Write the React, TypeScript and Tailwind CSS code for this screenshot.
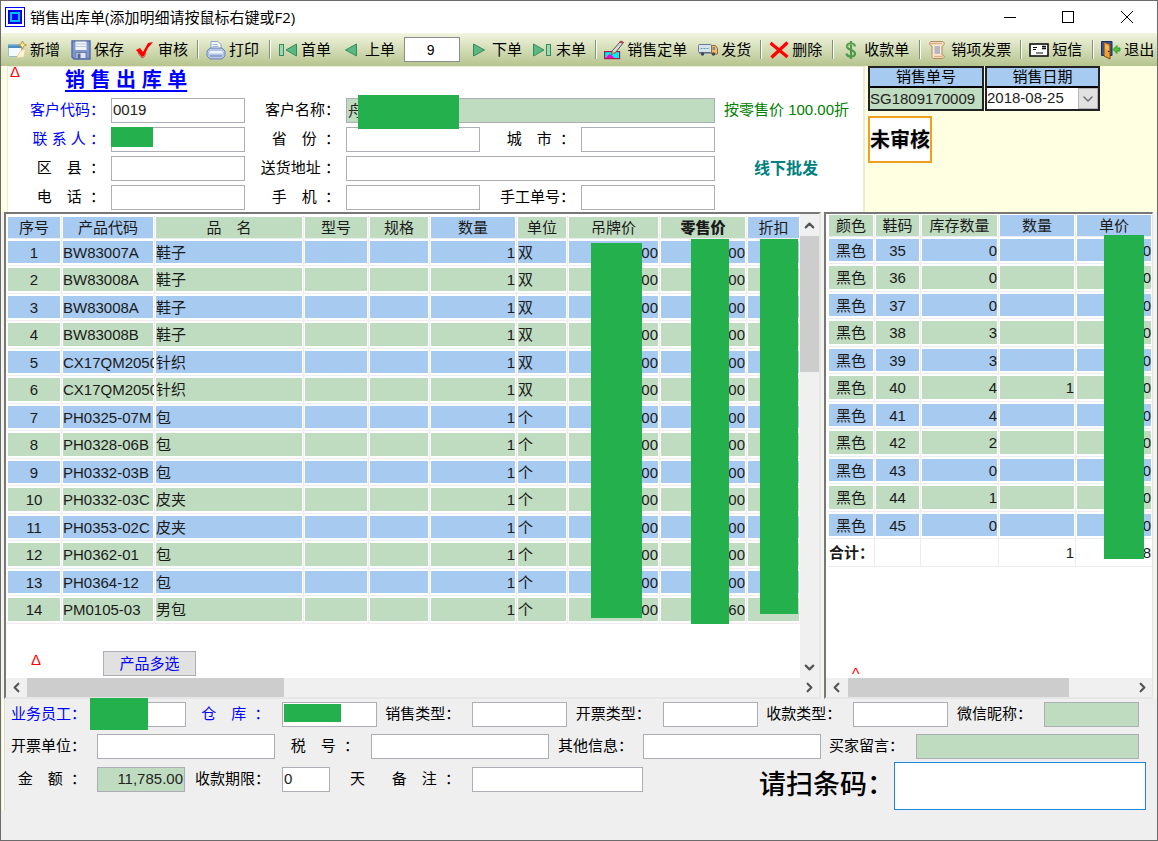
import React from 'react';
import { ChevronDown, ChevronLeft, ChevronRight, ChevronUp } from 'lucide-react';

const ICON = 'h-[20px] w-[20px] shrink-0';

const NewIcon = () => (
  <svg className={ICON} viewBox="0 0 20 20">
    <rect x="1.500" y="4.500" width="13" height="12" rx="1" fill="#f3fafd" stroke="#9db8c8" />
    <rect x="1" y="4" width="14" height="4" fill="#4a8fc0" />
    <rect x="1" y="4" width="14" height="1.500" fill="#86bbdc" />
    <path d="M9.500 18l7.500-1 1.500-8-5 2z" fill="#fff2cf" stroke="#e3c98d" strokeWidth=".7" />
    <path d="M15.500 1l1.200 2.800L19.500 5l-2.800 1.200L15.500 9l-1.200-2.800L11.500 5l2.800-1.200z" fill="#ffe9a0" stroke="#b98f2e" strokeWidth=".9" />
  </svg>
);
const SaveIcon = () => (
  <svg className={ICON} viewBox="0 0 20 20">
    <path d="M1 1h18v18H3l-2-2z" fill="#8097cf" stroke="#5468a8" strokeWidth="1.400" />
    <rect x="4.500" y="1.500" width="11" height="8.500" fill="#f2f5fa" />
    <path d="M5 4h10M5 6.500h10" stroke="#b9c7de" />
    <rect x="5" y="12.500" width="10" height="6" fill="#dfe4ea" stroke="#5b6f99" strokeWidth=".8" />
    <rect x="6.500" y="13.500" width="3" height="5" fill="#4d68a8" />
  </svg>
);
const CheckIcon = () => (
  <svg className={ICON} viewBox="0 0 20 20">
    <path d="M1 10l4-2 3 4 5-9 5-1-5 6-4 8-2 1z" fill="#f00" />
    <path d="M3 13l4 5 2-1 2-4" stroke="#b55" fill="none" />
  </svg>
);
const PrintIcon = () => (
  <svg className={ICON} viewBox="0 0 20 20">
    <path d="M5 9V1.500h7l3 3V9z" fill="#fbfdff" stroke="#88a2c8" />
    <path d="M6.500 4.500h5M6.500 6.500h6" stroke="#9bb5dc" />
    <path d="M1 11l3-3h12l3 3v5l-3 3H4l-3-3z" fill="#b3c4e4" stroke="#6d86b4" />
    <path d="M4 11h12l1 2.500H3z" fill="#eef3fb" />
    <path d="M4 16h12" stroke="#6d86b4" />
  </svg>
);
const FirstIcon = () => (
  <svg className={ICON} viewBox="0 0 20 20">
    <rect x="1.500" y="4.500" width="4" height="11" fill="#9fd7b2" stroke="#348c5c" />
    <path d="M18.500 4v12L8 10z" fill="#5cb882" stroke="#348c5c" />
  </svg>
);
const PrevIcon = () => (
  <svg className={ICON} viewBox="0 0 20 20">
    <path d="M14.500 4v12L3.500 10z" fill="#5cb882" stroke="#348c5c" />
  </svg>
);
const NextIcon = () => (
  <svg className={ICON} viewBox="0 0 20 20">
    <path d="M4.500 4v12l11-6z" fill="#5cb882" stroke="#348c5c" />
  </svg>
);
const LastIcon = () => (
  <svg className={ICON} viewBox="0 0 20 20">
    <path d="M.500 4v12L11 10z" fill="#5cb882" stroke="#348c5c" />
    <rect x="13.500" y="4.500" width="4" height="11" fill="#9fd7b2" stroke="#348c5c" />
  </svg>
);
const OrderIcon = () => (
  <svg className={ICON} viewBox="0 0 20 20">
    <rect x=".600" y="11.600" width="15" height="7" fill="#0ee" stroke="#a02050" strokeWidth="1.200" />
    <path d="M1.500 18l4-4 3 2 2 2z" fill="#f0c" />
    <path d="M7.500 14.500l1-4L16.500 1.500l3 1-8 10z" fill="#d9d9d9" stroke="#444" strokeWidth=".9" />
    <path d="M15 2l2-1.500 2.500 1.500-1 2z" fill="#b8434e" />
    <path d="M7.500 14.500l1-3 2 1.500z" fill="#e8a33a" />
  </svg>
);
const TruckIcon = () => (
  <svg className={ICON} viewBox="0 0 20 20">
    <rect x=".500" y="4.500" width="13" height="8" rx="1" fill="#d5e3ec" stroke="#667c99" />
    <path d="M2.500 8.500h9" stroke="#55a0b0" strokeDasharray="2 1" />
    <path d="M13.500 5.500h4l2 3V14h-6z" fill="#f0bd60" stroke="#8a6d45" />
    <rect x="14.500" y="7" width="2.500" height="3" fill="#889" />
    <path d="M1 13h12" stroke="#4b5f80" />
    <circle cx="4.500" cy="14" r="1.700" fill="#445" />
    <circle cx="15.500" cy="14" r="1.700" fill="#445" />
  </svg>
);
const DeleteIcon = () => (
  <svg className={ICON} viewBox="0 0 20 20">
    <path d="M1.500 3l17 14M18.500 2.500L2.500 17.500" stroke="#f00" strokeWidth="3.200" />
  </svg>
);
const DollarIcon = () => (
  <svg className={ICON} viewBox="0 0 20 20">
    <path d="M14 6.500c-.5-4-8-4-8 0s8 3 8 7-8 4-8.500 0M10 1v18" fill="none" stroke="#4d9a4a" strokeWidth="2.200" />
    <path d="M13.500 6.500c-.5-3-7-3-7 0" fill="none" stroke="#8fca78" strokeWidth="1" />
  </svg>
);
const InvoiceIcon = () => (
  <svg className={ICON} viewBox="0 0 20 20">
    <path d="M3 1.500h11c3 0 3 4 0 4.500v9c3 0 3 3.500 0 3.500H6c-2 0-2-2-2-3V6C1 6 1 1.500 3 1.500z" fill="#fbe9cf" stroke="#b58b62" />
    <path d="M6.500 7h5.500M6.500 9h5.500M6.500 11h5.500M6.500 13h5.500" stroke="#6f8ab5" />
    <path d="M2 3.500h12M6 16.500h9" stroke="#d9b083" strokeWidth="1.500" />
  </svg>
);
const MessageIcon = () => (
  <svg className={ICON} viewBox="0 0 20 20">
    <rect x="1" y="4" width="18" height="12" fill="#fff" stroke="#111" strokeWidth="1.600" />
    <path d="M4 7.500h4M4 9.500h3M7 13h7" stroke="#111" />
    <path d="M13 6.500h4M13 8.500h4" stroke="#111" strokeWidth="1.500" />
  </svg>
);
const ExitIcon = () => (
  <svg className={ICON} viewBox="0 0 20 20">
    <path d="M.500 1.500h10.500v14H.500z" fill="#2c55ad" stroke="#1b2c5c" />
    <path d="M3 2l6 2.500V19l-6-3z" fill="#f0a030" stroke="#7a4310" />
    <path d="M4.500 5l3 1v4l-3-1z" fill="#f9c05f" />
    <circle cx="7.700" cy="11.500" r=".8" fill="#402000" />
    <path d="M12 9.500l4-4v2.500h3v3h-3v2.500z" fill="#4fc43a" stroke="#2c8a22" strokeWidth=".8" />
  </svg>
);

function Tool({ icon, text }: { icon: React.ReactNode; text: string }) {
  return (
    <button type="button" className="flex shrink-0 items-center gap-[3px] whitespace-nowrap leading-[20px]">
      {icon}
      <span>{text}</span>
    </button>
  );
}
const Group = ({ children }: { children: React.ReactNode }) => (
  <div className="flex shrink-0 items-center gap-[11px]">{children}</div>
);
const Sep = () => <div className="mr-[7px] ml-[10px] h-[19px] w-[2px] shrink-0 border-l border-[#7d9470] bg-white" />;
const TightSep = () => <div className="mr-[7px] ml-[9px] h-[19px] w-[2px] shrink-0 border-l border-[#7d9470] bg-white" />;

const BOX = 'h-[25px] min-w-0 border border-[#adadb6] px-px pb-[3px] text-[15px] leading-[20px] text-[#222] outline-none';

const Caption = ({ id, text, className = '' }: { id: string; text: string; className?: string }) => (
  <label htmlFor={id} className={`text-right whitespace-pre ${className}`}>
    {text}
  </label>
);
const Field = ({ id, value = '', className = '' }: { id: string; value?: string; className?: string }) => (
  <input id={id} defaultValue={value} className={`${BOX} ${className}`} />
);

const CELL = 'overflow-hidden border-r border-b border-[#ededed] bg-clip-content px-px py-[2px] leading-[21px] whitespace-nowrap';
const HEAD = 'overflow-hidden border-r border-b border-[#ededed] bg-clip-content px-px pt-px leading-[21px] whitespace-nowrap';
const BLUE = 'bg-[#a6caf0]';
const GREEN = 'bg-[#c0dcc0]';

const LEFT_HEAD: [string, string, string][] = [
  ['序号', 'w-[55px]', `${BLUE} font-normal`],
  ['产品代码', 'w-[93px]', `${BLUE} font-normal`],
  ['品　名', 'w-[149px]', `${GREEN} font-normal`],
  ['型号', 'w-[65px]', `${GREEN} font-normal`],
  ['规格', 'w-[61px]', `${GREEN} font-normal`],
  ['数量', 'w-[87px]', `${BLUE} font-normal`],
  ['单位', 'w-[51px]', `${GREEN} font-normal`],
  ['吊牌价', 'w-[92px]', `${GREEN} font-normal`],
  ['零售价', 'w-[87px]', `${GREEN} font-black`],
  ['折扣', 'w-[54px]', `${BLUE} font-normal`],
];
const PRODUCTS: [string, string, string, string][] = [
  ['BW83007A', '鞋子', '双', '00'],
  ['BW83008A', '鞋子', '双', '00'],
  ['BW83008A', '鞋子', '双', '00'],
  ['BW83008B', '鞋子', '双', '00'],
  ['CX17QM2050', '针织', '双', '00'],
  ['CX17QM2050', '针织', '双', '00'],
  ['PH0325-07M', '包', '个', '00'],
  ['PH0328-06B', '包', '个', '00'],
  ['PH0332-03B', '包', '个', '00'],
  ['PH0332-03C', '皮夹', '个', '00'],
  ['PH0353-02C', '皮夹', '个', '00'],
  ['PH0362-01', '包', '个', '00'],
  ['PH0364-12', '包', '个', '00'],
  ['PM0105-03', '男包', '个', '60'],
];
const RIGHT_HEAD: [string, string, string][] = [
  ['颜色', 'w-[47px]', GREEN],
  ['鞋码', 'w-[46px]', GREEN],
  ['库存数量', 'w-[78px]', GREEN],
  ['数量', 'w-[77px]', BLUE],
  ['单价', 'w-[77px]', BLUE],
];
const SIZES: [number, number, string][] = [
  [35, 0, ''], [36, 0, ''], [37, 0, ''], [38, 3, ''], [39, 3, ''], [40, 4, '1'],
  [41, 4, ''], [42, 2, ''], [43, 0, ''], [44, 1, ''], [45, 0, ''],
];

const Cover = ({ className }: { className: string }) => <div className={`absolute bg-[#24b14d] ${className}`} />;

function HScroll({ thumb }: { thumb: string }) {
  return (
    <div className="flex h-[19px] shrink-0 items-center bg-[#f0f0f0] text-[#555]">
      <button type="button" aria-label="向左" className="flex w-[20px] justify-center">
        <ChevronLeft size={15} strokeWidth={3.5} />
      </button>
      <div className="h-full min-w-0 flex-1">
        <div className={`h-full bg-[#cdcdcd] ${thumb}`} />
      </div>
      <button type="button" aria-label="向右" className="flex w-[20px] justify-center">
        <ChevronRight size={15} strokeWidth={3.5} />
      </button>
    </div>
  );
}

function ProductGrid() {
  return (
    <section className="relative flex min-w-0 flex-1 flex-col border-2 border-t-[#777] border-r-[#e6e6e6] border-b-[#e6e6e6] border-l-[#777] bg-white">
      <div className="flex min-h-0 flex-1">
        <div className="min-w-0 flex-1 overflow-hidden pt-[2px] pl-px">
          <table className="w-[794px] table-fixed border-separate border-spacing-0 text-[#1a1a1a]">
            <thead>
              <tr className="h-[23px]">
                {LEFT_HEAD.map(([t, w, c]) => (
                  <th key={t} className={`${HEAD} ${w} ${c}`}>{t}</th>
                ))}
              </tr>
            </thead>
            <tbody>
              {PRODUCTS.map(([code, name, unit, cents], i) => {
                const c = `${CELL} ${i % 2 ? GREEN : BLUE}`;
                return (
                  <tr key={i} className="odd:h-[27px] even:h-[28px]">
                    <td className={`${c} text-center`}>{i + 1}</td>
                    <td className={c}>{code}</td>
                    <td className={c}>{name}</td>
                    <td className={c} />
                    <td className={c} />
                    <td className={`${c} text-right`}>1</td>
                    <td className={c}>{unit}</td>
                    <td className={`${c} text-right`}>00</td>
                    <td className={`${c} text-right`}>{cents}</td>
                    <td className={c} />
                  </tr>
                );
              })}
            </tbody>
          </table>
          <div className="mt-[27px] flex">
            <span className="w-[96px] pl-[24px] text-[15px] leading-[18px] text-[#f00]">Δ</span>
            <button type="button" className="h-[25px] w-[93px] border border-[#adadb6] bg-[#e1e1e1] leading-[20px] text-[#00f]">
              产品多选
            </button>
          </div>
        </div>
        <div className="flex w-[19px] shrink-0 flex-col bg-[#f0f0f0] text-[#555]">
          <button type="button" aria-label="向上" className="flex h-[22px] items-center justify-center">
            <ChevronUp size={15} strokeWidth={3.5} />
          </button>
          <div className="h-[136px] bg-[#cdcdcd]" />
          <button type="button" aria-label="向下" className="mt-auto flex h-[22px] items-center justify-center">
            <ChevronDown size={15} strokeWidth={3.5} />
          </button>
        </div>
      </div>
      <HScroll thumb="ml-px w-[257px]" />
      <Cover className="top-[29px] left-[585px] h-[375px] w-[51px]" />
      <Cover className="top-[25px] left-[685px] h-[385px] w-[38px]" />
      <Cover className="top-[25px] left-[754px] h-[375px] w-[38px]" />
    </section>
  );
}

function SizeGrid() {
  return (
    <section className="relative flex w-[329px] shrink-0 flex-col border-t-2 border-r border-b-2 border-l-2 border-t-[#777] border-r-[#e6e6e6] border-b-[#e6e6e6] border-l-[#777] bg-white">
      <div className="min-h-0 flex-1 overflow-hidden pl-[2px]">
        <table className="w-[325px] table-fixed border-separate border-spacing-0 text-[#1a1a1a]">
          <thead>
            <tr className="h-[23px]">
              {RIGHT_HEAD.map(([t, w, c]) => (
                <th key={t} className={`${HEAD} font-normal ${w} ${c}`}>{t}</th>
              ))}
            </tr>
          </thead>
          <tbody>
            {SIZES.map(([size, stock, qty], i) => {
              const c = `${CELL} ${i % 2 ? GREEN : BLUE}`;
              return (
                <tr key={size} className="odd:h-[27px] even:h-[28px]">
                  <td className={`${c} text-center`}>黑色</td>
                  <td className={`${c} text-center`}>{size}</td>
                  <td className={`${c} text-right`}>{stock}</td>
                  <td className={`${c} text-right`}>{qty}</td>
                  <td className={`${c} text-right`}>0</td>
                </tr>
              );
            })}
            <tr className="h-[28px]">
              <td className={`${CELL} font-bold`}>合计：</td>
              <td className={CELL} />
              <td className={CELL} />
              <td className={`${CELL} text-right`}>1</td>
              <td className={`${CELL} text-right`}>8</td>
            </tr>
          </tbody>
        </table>
      </div>
      <span className="absolute bottom-[12px] left-[26px] text-[16px] leading-[20px] text-[#f00]">^</span>
      <HScroll thumb="ml-[2px] w-[221px]" />
      <Cover className="top-[21px] right-[8px] h-[324px] w-[40px]" />
    </section>
  );
}

export default function App() {
  return (
    <div className="flex min-h-screen flex-col bg-[#efefef] pb-px text-[15px] text-black [font-family:'Liberation_Sans','Noto_Sans_CJK_SC',sans-serif]">
      <div className="flex flex-1 flex-col overflow-hidden border border-[#6b6b6b] bg-[#efefef]">
        <header className="flex h-[32px] shrink-0 items-center bg-white pl-[4px]">
          <svg className="h-[20px] w-[20px]" viewBox="0 0 20 20">
            <rect x=".5" y=".5" width="19" height="19" fill="#fff" stroke="#00f" />
            <rect x="3" y="3" width="14" height="14" fill="#0000e0" />
            <rect x="5" y="5" width="10" height="10" fill="#0bf" />
            <rect x="7" y="7" width="6" height="6" fill="#00f" />
          </svg>
          <h1 className="ml-[5px] flex-1 text-[15px] leading-[20px] [font-family:'Open_Sans','Noto_Sans_CJK_SC',sans-serif]">
            销售出库单(添加明细请按鼠标右键或F2)
          </h1>
          <button type="button" aria-label="最小化" className="flex w-[58px] justify-center">
            <svg className="h-[14px] w-[14px]" viewBox="0 0 14 14"><path d="M1 7.500h12" stroke="#000" /></svg>
          </button>
          <button type="button" aria-label="最大化" className="flex w-[58px] justify-center">
            <svg className="h-[14px] w-[14px]" viewBox="0 0 14 14"><rect x="1.500" y="1.500" width="11" height="11" fill="none" stroke="#000" /></svg>
          </button>
          <button type="button" aria-label="关闭" className="flex w-[60px] justify-center">
            <svg className="h-[14px] w-[14px]" viewBox="0 0 14 14"><path d="M1 1l12 12M13 1L1 13" stroke="#000" /></svg>
          </button>
        </header>

        <nav className="flex h-[33px] shrink-0 items-center overflow-hidden bg-linear-to-b from-[#f2f5df] to-[#b6c48e] pl-[6px]">
          <Group>
            <Tool icon={<NewIcon />} text="新增" />
            <Tool icon={<SaveIcon />} text="保存" />
            <Tool icon={<CheckIcon />} text="审核" />
          </Group>
          <TightSep />
          <Tool icon={<PrintIcon />} text="打印" />
          <Sep />
          <Group>
            <Tool icon={<FirstIcon />} text="首单" />
            <Tool icon={<PrevIcon />} text="上单" />
            <input aria-label="单据序号" defaultValue="9" className="-mx-[2px] h-[25px] w-[56px] border border-[#8c8c8c] bg-white pr-[3px] text-center text-[14px]" />
            <Tool icon={<NextIcon />} text="下单" />
            <Tool icon={<LastIcon />} text="末单" />
          </Group>
          <TightSep />
          <Group>
            <Tool icon={<OrderIcon />} text="销售定单" />
            <Tool icon={<TruckIcon />} text="发货" />
          </Group>
          <TightSep />
          <Tool icon={<DeleteIcon />} text="删除" />
          <Sep />
          <Tool icon={<DollarIcon />} text="收款单" />
          <Sep />
          <Tool icon={<InvoiceIcon />} text="销项发票" />
          <TightSep />
          <Tool icon={<MessageIcon />} text="短信" />
          <Sep />
          <Tool icon={<ExitIcon />} text="退出" />
        </nav>

        <div className="flex h-[146px] shrink-0 bg-[#ffffe1] pl-[6px]">
          <div className="relative w-[858px] border-t border-r-2 border-l border-[#ebebd8] bg-white">
            <span className="absolute top-[-4px] left-[2px] text-[15px] leading-[18px] text-[#f00]">Δ</span>
            <h2 className="h-[31px] pl-[57px] text-[20px] leading-[26px] font-bold whitespace-pre text-[#00f] underline underline-offset-3">
              销 售 出 库 单
            </h2>
            <form className="grid grid-cols-[97px_134px_89px_134px_89px_134px_1fr] items-center gap-x-[6px] gap-y-[4px]">
              <Caption id="code" text="客户代码：" className="text-[#00f]" />
              <Field id="code" value="0019" />
              <Caption id="name" text="客户名称：" />
              <div className="relative col-span-3 flex">
                <Field id="name" value="舟" className="flex-1 bg-[#c0dcc0]" />
                <Cover className="top-[-3px] left-[12px] h-[34px] w-[101px]" />
              </div>
              <span className="pl-[3px] whitespace-nowrap text-[#008000]">按零售价 100.00折</span>

              <Caption id="contact" text="联 系 人 ：" className="text-[#00f]" />
              <div className="relative flex">
                <Field id="contact" className="flex-1" />
                <Cover className="top-0 left-0 h-[20px] w-[42px]" />
              </div>
              <Caption id="province" text="省　份  ：" />
              <Field id="province" />
              <Caption id="city" text="城　市  ：" />
              <Field id="city" />
              <span />

              <Caption id="county" text="区　县  ：" />
              <Field id="county" />
              <Caption id="address" text="送货地址 ：" />
              <Field id="address" className="col-span-3" />
              <strong className="pl-[33px] text-[16px] leading-[20px] text-[#008080]">线下批发</strong>

              <Caption id="phone" text="电　话  ：" />
              <Field id="phone" />
              <Caption id="mobile" text="手　机  ：" />
              <Field id="mobile" />
              <Caption id="manual" text="手工单号：" />
              <Field id="manual" />
            </form>
          </div>
          <div className="pl-[3px]">
            <div className="flex gap-px">
              <div className="w-[116px] border-2 border-[#222] bg-[#c0dcc0]">
                <div className="border-b-2 border-black bg-[#a6caf0] text-center leading-[18px]">
                  <label htmlFor="order-no">销售单号</label>
                </div>
                <input id="order-no" defaultValue="SG1809170009" className="block h-[21px] w-full pb-px leading-[18px] text-[#222]" />
              </div>
              <div className="w-[115px] border-2 border-[#222] bg-white">
                <div className="border-b-2 border-black bg-[#a6caf0] text-center leading-[18px]">
                  <label htmlFor="date">销售日期</label>
                </div>
                <div className="relative">
                  <select id="date" className="block h-[21px] w-full appearance-none pb-px leading-[18px] text-[#222]">
                    <option>2018-08-25</option>
                  </select>
                  <span className="pointer-events-none absolute top-0 right-0 flex h-[21px] w-[20px] items-center justify-center border border-[#b5b5b5] bg-[#e1e1e1] text-[#666]">
                    <ChevronDown size={16} strokeWidth={2} />
                  </span>
                </div>
              </div>
            </div>
            <div className="mt-[5px] flex h-[47px] w-[64px] items-center justify-center border-2 border-[#f0a020] bg-white text-[20px] font-bold whitespace-nowrap text-shadow-sm">
              未审核
            </div>
          </div>
        </div>

        <main className="flex h-[487px] shrink-0 gap-[3px] bg-[#f4f4ee] pr-[4px] pl-[3px]">
          <ProductGrid />
          <SizeGrid />
        </main>

        <footer className="flex flex-1 pb-[30px] pl-px">
          <div className="mr-[6px] w-[3px] border-r border-[#dcdcd4] bg-[#ffffe1]" />
          <div className="flex min-w-0 flex-1 flex-col pt-[3px]">
            <div className="flex items-center pr-[18px]">
              <Caption id="staff" text="业务员工：" className="w-[79px] pr-[4px] text-[#00f]" />
              <div className="relative flex w-[96px]">
                <Field id="staff" className="flex-1 bg-white" />
                <Cover className="top-[-4px] left-0 h-[32px] w-[58px]" />
              </div>
              <Caption id="store" text="仓　库  ：" className="flex-1 pr-[12px] text-[#00f]" />
              <div className="relative flex w-[95px]">
                <Field id="store" className="flex-1 bg-white" />
                <Cover className="top-[2px] left-[2px] h-[18px] w-[57px]" />
              </div>
              <Caption id="sale-type" text="销售类型：" className="flex-1 pr-[12px]" />
              <Field id="sale-type" className="w-[95px] bg-white" />
              <Caption id="bill-type" text="开票类型：" className="flex-1 pr-[12px]" />
              <Field id="bill-type" className="w-[95px] bg-white" />
              <Caption id="pay-type" text="收款类型：" className="flex-1 pr-[12px]" />
              <Field id="pay-type" className="w-[95px] bg-white" />
              <Caption id="wechat" text="微信昵称：" className="flex-1 pr-[12px]" />
              <Field id="wechat" className="w-[95px] bg-[#c0dcc0]" />
            </div>
            <div className="mt-[7px] flex items-center pr-[18px]">
              <Caption id="company" text="开票单位：" className="w-[86px] pr-[11px]" />
              <Field id="company" className="w-[178px] bg-white" />
              <Caption id="tax" text="税　号  ：" className="w-[96px] pr-[12px]" />
              <Field id="tax" className="w-[178px] bg-white" />
              <Caption id="other" text="其他信息：" className="w-[94px] pr-[10px]" />
              <Field id="other" className="w-[178px] bg-white" />
              <Caption id="remark" text="买家留言：" className="w-[95px] pr-[12px]" />
              <Field id="remark" className="flex-1 bg-[#c0dcc0]" />
            </div>
            <div className="mt-[3px] flex items-start pr-[11px]">
              <div className="flex items-center pt-[5px]">
                <Caption id="amount" text="金　额  ：" className="w-[86px] pr-[11px]" />
                <Field id="amount" value="11,785.00" className="w-[88px] bg-[#c0dcc0] text-right" />
                <Caption id="term" text="收款期限：" className="w-[97px] pr-[12px]" />
                <Field id="term" value="0" className="w-[48px] bg-white" />
                <span className="w-[36px] pl-[20px]">天</span>
                <Caption id="note" text="备　注  ：" className="w-[106px] pr-[12px]" />
                <Field id="note" className="w-[171px] bg-white" />
              </div>
              <label htmlFor="barcode" className="ml-auto text-[27px] leading-[47px] font-medium">请扫条码：</label>
              <input id="barcode" className="h-[48px] w-[252px] border border-[#1f86d8] bg-white px-[4px] text-[24px]" />
            </div>
          </div>
        </footer>
      </div>
    </div>
  );
}
